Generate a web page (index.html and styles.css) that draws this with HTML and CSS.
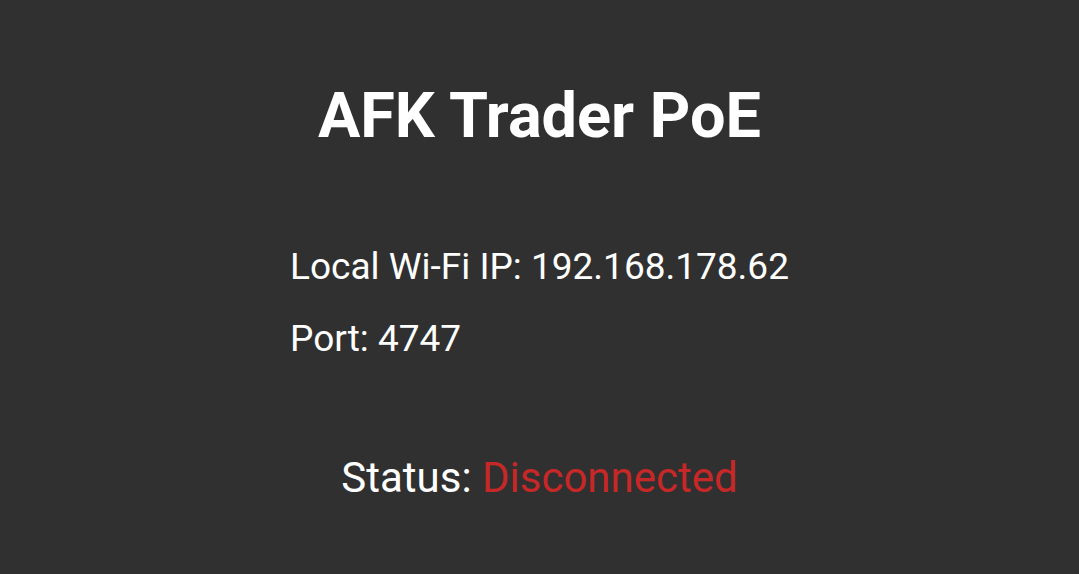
FILE: index.html
```html
<!DOCTYPE html>
<html>
<head>
<meta charset="utf-8">
<link rel="stylesheet" href="styles.css">
</head>
<body>
<div class="app">
  <h1 class="title">AFK Trader PoE</h1>
  <div class="info">
    <div class="line">Local Wi-Fi IP: 192.168.178.62</div>
    <div class="line">Port: 4747</div>
  </div>
  <div class="status">Status: <span class="bad">Disconnected</span></div>
</div>
</body>
</html>
```
FILE: styles.css
```css
html, body {
  margin: 0;
  padding: 0;
  background: #303030;
}
.app {
  width: 1079px;
  height: 574px;
  display: flex;
  flex-direction: column;
  align-items: center;
  font-family: Roboto, "Noto Sans", sans-serif;
  color: #ffffff;
}
.title {
  margin: 79px 0 0 0;
  font-size: 63px;
  font-weight: 700;
  line-height: 74px;
}
.info {
  margin-top: 92px;
  display: flex;
  flex-direction: column;
  gap: 28px;
  font-size: 37px;
  line-height: 44px;
}
.status {
  margin-top: 92px;
  font-size: 42px;
  line-height: 50px;
}
.bad {
  color: #c62828;
}
```
